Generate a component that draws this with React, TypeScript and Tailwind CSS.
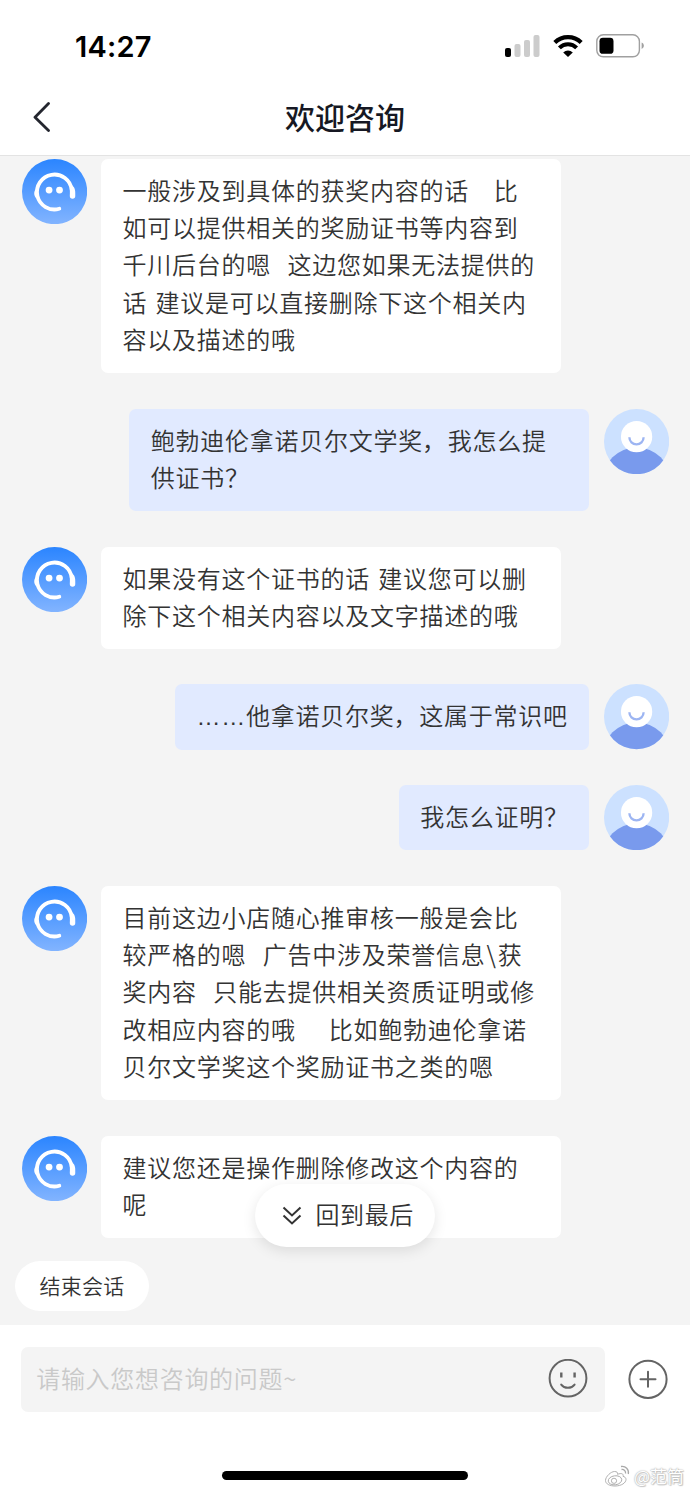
type Sender = "agent" | "user";

interface Message {
  id: number;
  from: Sender;
  lines: string[];
}

const messages: Message[] = [
  {
    id: 1,
    from: "agent",
    lines: [
      "一般涉及到具体的获奖内容的话   比",
      "如可以提供相关的奖励证书等内容到",
      "千川后台的嗯  这边您如果无法提供的",
      "话 建议是可以直接删除下这个相关内",
      "容以及描述的哦",
    ],
  },
  { id: 2, from: "user", lines: ["鲍勃迪伦拿诺贝尔文学奖，我怎么提", "供证书？"] },
  {
    id: 3,
    from: "agent",
    lines: ["如果没有这个证书的话 建议您可以删", "除下这个相关内容以及文字描述的哦"],
  },
  { id: 4, from: "user", lines: ["……他拿诺贝尔奖，这属于常识吧"] },
  { id: 5, from: "user", lines: ["我怎么证明？"] },
  {
    id: 6,
    from: "agent",
    lines: [
      "目前这边小店随心推审核一般是会比",
      "较严格的嗯  广告中涉及荣誉信息\\获",
      "奖内容  只能去提供相关资质证明或修",
      "改相应内容的哦    比如鲍勃迪伦拿诺",
      "贝尔文学奖这个奖励证书之类的嗯",
    ],
  },
  { id: 7, from: "agent", lines: ["建议您还是操作删除修改这个内容的", "呢"] },
];

// Optical spacing for punctuation inside Chinese text.
const punctuation: Record<string, string> = {
  "……": "font-['Liberation_Sans',sans-serif] leading-[0]",
  "，": "-ml-[1px] mr-[1px]",
  "？": "-mr-[1px]",
  "\\": "mx-[1px]",
};

function MessageLine({ text }: { text: string }) {
  return (
    <p className="h-[37.2px] whitespace-pre text-[24px] font-[350] leading-[37.2px] tracking-[0.75px] text-[#333] [word-spacing:2.1px]">
      {text.split(/(……|，|？|\\)/).map((part, index) =>
        punctuation[part] ? (
          <span key={index} className={punctuation[part]}>
            {part}
          </span>
        ) : (
          part
        ),
      )}
    </p>
  );
}

function StatusBar() {
  return (
    <div className="flex h-[80px] items-start justify-between pl-[75px] pr-[45px] pt-[29px]">
      <span className="font-['Inter',sans-serif] text-[29px] font-semibold leading-[35px] tracking-[0.2px] text-black">
        14:27
      </span>
      <div className="flex items-center gap-[13px] pt-[5px]">
        <svg width="35" height="24" viewBox="0 0 35 24">
          <rect x="0" y="14" width="6" height="9" rx="2" fill="#000" />
          <rect x="9.5" y="10" width="6" height="13" rx="2" fill="#ccc" />
          <rect x="19" y="6" width="6" height="17" rx="2" fill="#ccc" />
          <rect x="28.5" y="1" width="6" height="22" rx="2" fill="#ccc" />
        </svg>
        <svg width="30" height="24" viewBox="0 0 30 24" fill="none" stroke="#000">
          <path d="M1.8 8.4a19 19 0 0 1 26.4 0" strokeWidth="4.2" />
          <path d="M6.4 13.9a12 12 0 0 1 17.2 0" strokeWidth="4" />
          <path d="M10.2 18.4a7 7 0 0 1 9.6 0L15 23z" fill="#000" stroke="none" />
        </svg>
        <svg width="49" height="24" viewBox="0 0 49 24">
          <rect x="0.8" y="0.8" width="42.6" height="22" rx="6.5" fill="none" stroke="#a0a0a0" strokeWidth="1.4" />
          <rect x="3.5" y="3.8" width="14" height="16" rx="3.4" fill="#000" />
          <path d="M45.6 8.6c3 1.2 3 5.2 0 6.4z" fill="#a0a0a0" />
        </svg>
      </div>
    </div>
  );
}

function AgentAvatar() {
  return (
    <svg className="h-[65.2px] w-[65.2px] shrink-0" viewBox="0 0 65 65" fill="none">
      <defs>
        <linearGradient id="agent-bg" x1="0" y1="0" x2="0" y2="1">
          <stop offset="0" stopColor="#2b85ff" />
          <stop offset="1" stopColor="#82b4ff" />
        </linearGradient>
      </defs>
      <circle cx="32.5" cy="32.5" r="32.5" fill="url(#agent-bg)" />
      <path
        d="M37.2 49.6A17.4 17.4 0 1 1 49.6 31"
        stroke="#fff"
        strokeWidth="3.8"
        strokeLinecap="round"
      />
      <path d="M47.8 25.5C52.1 27 53.1 30 53.1 34V37A2.7 2.7 0 0 1 47.7 37z" fill="#fff" />
      <path d="M15.1 28.8C11.7 31 11 36 14.4 39.4L17.1 39z" fill="#fff" />
      <circle cx="27" cy="31" r="3.4" fill="#fff" />
      <circle cx="37.4" cy="31" r="3.4" fill="#fff" />
    </svg>
  );
}

function UserAvatar() {
  return (
    <svg className="h-[65.2px] w-[65.2px] shrink-0" viewBox="0 0 65 65" fill="none">
      <defs>
        <clipPath id="user-clip">
          <circle cx="32.5" cy="32.5" r="32.5" />
        </clipPath>
      </defs>
      <g clipPath="url(#user-clip)">
        <rect width="65" height="65" fill="#cce1ff" />
        <circle cx="32.5" cy="72.2" r="34" fill="#799aed" />
      </g>
      <circle cx="32.5" cy="27.6" r="15.6" fill="#fff" />
      <path d="M25.3 28.2a7.1 7.1 0 0 0 14.2 0" stroke="#9db5f2" strokeWidth="2.3" />
    </svg>
  );
}

function MessageRow({ message }: { message: Message }) {
  const isUser = message.from === "user";
  const isWide = !isUser || message.lines.length > 1;
  return (
    <div className={isUser ? "flex justify-end gap-[14.4px]" : "flex gap-[14.4px]"}>
      {isUser ? null : <AgentAvatar />}
      <div
        className={`rounded-[7px] px-[21.5px] pb-[16px] pt-[12px] ${
          isUser ? "bg-[#e1eaff]" : "bg-white"
        } ${isWide ? "w-[460px]" : ""}`}
      >
        {message.lines.map((line) => (
          <MessageLine key={line} text={line} />
        ))}
      </div>
      {isUser ? <UserAvatar /> : null}
    </div>
  );
}

function WeiboMark() {
  return (
    <div className="flex items-center gap-[3px]">
      <svg width="27" height="24" viewBox="0 0 27 24" fill="none" stroke="#a9a9a9" strokeWidth="0.9">
        <path d="M10.5 7.5C7 7.5 1.5 12.5 1.5 16.5c0 3.6 4.5 5.5 9.5 5.5 6.5 0 11-3.2 11-6.5 0-2-1.5-2.8-3-3.2.8-2.6-1.5-3.5-5.5-2 .7-1.8-.8-2.8-3-2.8z" />
        <ellipse cx="11" cy="16.3" rx="6.8" ry="4.5" transform="rotate(-8 11 16.3)" />
        <circle cx="10" cy="16.8" r="2.6" />
        <path d="M17 2.5c4.5-.8 8.3 3 7.3 7.5M17.5 5.5c2.5-.4 4.5 1.7 4 4" strokeWidth="1.3" />
      </svg>
      <span className="text-[17px] leading-[24px] text-white [text-shadow:0_0_1px_#aaa,0_0_2px_#bbb,1px_1px_1px_#ccc]">
        @范筒
      </span>
    </div>
  );
}

export default function App() {
  return (
    <div className="relative flex h-[1493px] w-[690px] flex-col overflow-hidden bg-white font-['Noto_Sans_CJK_SC',sans-serif]">
      <header className="h-[156px] shrink-0 border-b border-[#e3e3e3]">
        <StatusBar />
        <div className="grid h-[74px] grid-cols-[80px_1fr_80px] items-center">
          <button type="button" aria-label="返回" className="pl-[32px]">
            <svg width="20" height="30" viewBox="0 0 20 30" fill="none">
              <path d="M16.5 1.5L3 15.2L16.5 28.5" stroke="#24262f" strokeWidth="2.8" strokeLinecap="round" strokeLinejoin="round" />
            </svg>
          </button>
          <h1 className="pb-[3px] text-center text-[30px] font-medium leading-[40px] text-[#161823]">
            欢迎咨询
          </h1>
        </div>
      </header>

      <main className="flex h-[1169px] shrink-0 flex-col bg-[#f4f4f4] pt-[3px]">
        <div className="flex flex-col gap-[35.6px] pl-[21.5px] pr-[21.2px]">
          {messages.map((message) => (
            <MessageRow key={message.id} message={message} />
          ))}
        </div>
        <button
          type="button"
          className="ml-[15px] mt-[23.5px] h-[49.5px] w-[134px] rounded-full bg-white pb-[3px] text-[21px] font-[350] leading-[46px] tracking-[0.3px] text-[#333]"
        >
          结束会话
        </button>
      </main>

      <footer className="flex flex-1 flex-col pt-[21.5px]">
        <div className="flex items-center px-[21.2px]">
          <div className="flex h-[65.5px] w-[584px] items-center justify-between rounded-[7px] bg-[#f4f4f4] pl-[15px] pr-[17px]">
            <span className="pb-[3px] text-[24px] font-[350] leading-[36px] tracking-[0.7px] text-[#c9c9c9]">
              请输入您想咨询的问题~
            </span>
            <svg width="40" height="40" viewBox="0 0 40 40" fill="none" stroke="#646464" strokeWidth="2" strokeLinecap="round">
              <circle cx="20" cy="19.2" r="18.4" />
              <path d="M13.3 13.5v5M26.6 13.5v5" strokeLinecap="butt" strokeWidth="2.4" />
              <path d="M13.2 25.6c3.2 4.3 10.2 4.3 13.4 0" />
            </svg>
          </div>
          <svg className="ml-[22.5px]" width="40" height="40" viewBox="0 0 40 40" fill="none" stroke="#646464" strokeWidth="2">
            <circle cx="20" cy="20.3" r="18.6" />
            <path d="M12.5 20.3h15M20 12.8v15" strokeLinecap="round" />
          </svg>
        </div>
        <div className="mt-auto grid grid-cols-[222px_246px_1fr] items-center pb-[5px] pr-[6px]">
          <span />
          <span className="mb-[2px] h-[9px] rounded-full bg-black" />
          <div className="flex justify-end">
            <WeiboMark />
          </div>
        </div>
      </footer>

      <button
        type="button"
        className="absolute left-[255px] top-[1184px] flex h-[63px] w-[180px] items-center rounded-full bg-white pl-[27px] shadow-[0_4px_14px_rgba(0,0,0,0.1)]"
      >
        <svg width="20" height="20" viewBox="0 0 20 20" fill="none" stroke="#333" strokeWidth="2">
          <path d="M1.5 1.5L10 9.5L18.5 1.5M1.5 9.5L10 17.5L18.5 9.5" />
        </svg>
        <span className="ml-[13.5px] pb-[3px] text-[24px] font-[350] leading-[36px] tracking-[0.6px] text-[#333]">
          回到最后
        </span>
      </button>
    </div>
  );
}
